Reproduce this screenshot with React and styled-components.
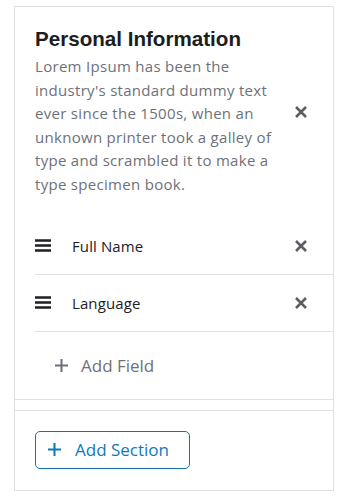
import React from 'react';
import styled, { createGlobalStyle } from 'styled-components';

const GlobalStyle = createGlobalStyle`
  body {
    margin: 0;
    background: #fff;
    font-family: 'Open Sans', 'Noto Sans', sans-serif;
  }
`;

const Panel = styled.div`
  box-sizing: border-box;
  width: 320px;
  margin: 6px 0 0 14px;
  border: 1px solid #dfe0e4;
`;

const Section = styled.div`
  padding: 20px 0 0 20px;
  border-bottom: 1px solid #dfe0e4;
`;

const Header = styled.div`
  display: flex;
  align-items: center;
  padding-right: 26px;
`;

const HeaderText = styled.div`
  flex: 1;
`;

const Title = styled.h2`
  margin: 0 0 4px;
  font-family: 'Liberation Sans', Arial, sans-serif;
  font-size: 20.6px;
  font-weight: 700;
  line-height: 24px;
  color: #1c1d21;
`;

const Description = styled.p`
  margin: 0;
  width: 252px;
  font-size: 15px;
  letter-spacing: 0.3px;
  line-height: 23.6px;
  color: #6e7179;
`;

const IconButton = styled.button`
  display: flex;
  align-items: center;
  justify-content: center;
  padding: 0;
  border: 0;
  background: none;
  color: ${(p) => p.$color || '#5a5d63'};
  cursor: pointer;
`;

const FieldList = styled.div`
  margin-top: 21px;
`;

const FieldRow = styled.div`
  display: flex;
  align-items: center;
  height: 56px;
  padding-right: 26px;
  border-bottom: 1px solid #dfe0e4;
`;

const FieldLabel = styled.span`
  flex: 1;
  margin-left: 21px;
  font-size: 15px;
  letter-spacing: 0.1px;
  color: #1f2024;
`;

const AddFieldButton = styled.button`
  display: flex;
  align-items: center;
  gap: 13px;
  height: 67px;
  padding: 0 0 0 20px;
  border: 0;
  background: none;
  font-family: inherit;
  font-size: 17px;
  color: #6e7179;
  cursor: pointer;
`;

const Footer = styled.div`
  margin-top: 10px;
  padding: 20px 20px 21px;
  border-top: 1px solid #dfe0e4;
`;

const OutlineButton = styled.button`
  display: flex;
  align-items: center;
  gap: 14px;
  box-sizing: border-box;
  width: 155px;
  height: 38px;
  padding: 0 0 0 12px;
  border: 1px solid #1474a8;
  border-radius: 5px;
  background: #fff;
  font-family: inherit;
  font-size: 17px;
  color: #0b7bbd;
  cursor: pointer;
`;

function CloseIcon() {
  return (
    <svg width="12" height="12" viewBox="0 0 12 12">
      <path d="M1 1L11 11M11 1L1 11" stroke="currentColor" strokeWidth="2.6" />
    </svg>
  );
}

function PlusIcon({ size = 13 }) {
  return (
    <svg width={size} height={size} viewBox="0 0 14 14">
      <path d="M7 0V14M0 7H14" stroke="currentColor" strokeWidth="2.2" />
    </svg>
  );
}

function DragIcon() {
  return (
    <svg width="16" height="13" viewBox="0 0 16 13">
      <path d="M0 1.5H16M0 6.5H16M0 11.5H16" stroke="#1f2024" strokeWidth="2.4" />
    </svg>
  );
}

const fields = ['Full Name', 'Language'];

export default function App() {
  return (
    <>
      <GlobalStyle />
      <Panel>
        <Section>
          <Header>
            <HeaderText>
              <Title>Personal Information</Title>
              <Description>
                Lorem Ipsum has been the industry's standard dummy text ever since the 1500s, when an
                unknown printer took a galley of type and scrambled it to make a type specimen book.
              </Description>
            </HeaderText>
            <IconButton aria-label="Remove section">
              <CloseIcon />
            </IconButton>
          </Header>
          <FieldList>
            {fields.map((f) => (
              <FieldRow key={f}>
                <DragIcon />
                <FieldLabel>{f}</FieldLabel>
                <IconButton aria-label={`Remove ${f}`}>
                  <CloseIcon />
                </IconButton>
              </FieldRow>
            ))}
          </FieldList>
          <AddFieldButton>
            <PlusIcon />
            Add Field
          </AddFieldButton>
        </Section>
        <Footer>
          <OutlineButton>
            <PlusIcon />
            Add Section
          </OutlineButton>
        </Footer>
      </Panel>
    </>
  );
}
